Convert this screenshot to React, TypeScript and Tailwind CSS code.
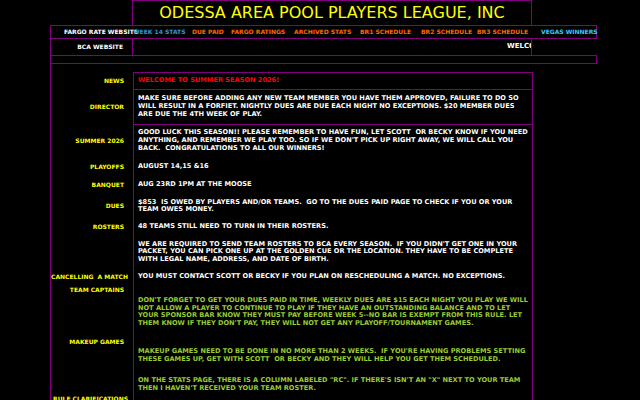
const navLinks = [
  { label: "WEEK 14 STATS", width: "w-[59px]", color: "text-[#3399cc]" },
  { label: "DUE PAID", width: "w-[39px]", color: "text-[#ff6600]" },
  { label: "FARGO RATINGS", width: "w-[63px]", color: "text-[#ff6600]" },
  { label: "ARCHIVED STATS", width: "w-[66px]", color: "text-[#ff6600]" },
  { label: "BR1 SCHEDULE", width: "w-[61px]", color: "text-[#ff6600]" },
  { label: "BR2 SCHEDULE", width: "w-[56px]", color: "text-[#ff6600]" },
  { label: "BR3 SCHEDULE", width: "w-[64px]", color: "text-[#ff6600]" },
  { label: "VEGAS WINNERS", width: "w-[56px]", color: "text-[#33ccff]" },
]

// left column labels, margins tuned to line up with the notices on the right
const labels = [
  { text: "NEWS", mt: "mt-[12.6px]" },
  { text: "DIRECTOR", mt: "mt-[18.5px]" },
  { text: "SUMMER 2026", mt: "mt-[26.6px]" },
  { text: "PLAYOFFS", mt: "mt-[18.6px]" },
  { text: "BANQUET", mt: "mt-[10.3px]" },
  { text: "DUES", mt: "mt-[13.3px]" },
  { text: "ROSTERS", mt: "mt-[13.3px]" },
  { text: "CANCELLING  A MATCH", mt: "mt-[42.3px]", wide: true },
  { text: "TEAM CAPTAINS", mt: "mt-[4.7px]" },
  { text: "MAKEUP GAMES", mt: "mt-[44.3px]" },
  { text: "RULE CLARIFICATIONS", mt: "mt-[49.9px]", wide: true },
]

const notices = [
  {
    mt: "mt-[4.2px]",
    color: "text-white",
    lines: [
      "GOOD LUCK THIS SEASON!! PLEASE REMEMBER TO HAVE FUN, LET SCOTT  OR BECKY KNOW IF YOU NEED",
      "ANYTHING, AND REMEMBER WE PLAY TOO. SO IF WE DON'T PICK UP RIGHT AWAY, WE WILL CALL YOU",
      "BACK.  CONGRATULATIONS TO ALL OUR WINNERS!",
    ],
  },
  { mt: "mt-[11.2px]", color: "text-white", lines: ["AUGUST 14,15 &16"] },
  { mt: "mt-[10.3px]", color: "text-white", lines: ["AUG 23RD 1PM AT THE MOOSE"] },
  {
    mt: "mt-[9.6px]",
    color: "text-white",
    lines: [
      "$853  IS OWED BY PLAYERS AND/OR TEAMS.  GO TO THE DUES PAID PAGE TO CHECK IF YOU OR YOUR",
      "TEAM OWES MONEY.",
    ],
  },
  { mt: "mt-[9.3px]", color: "text-white", lines: ["48 TEAMS STILL NEED TO TURN IN THEIR ROSTERS."] },
  {
    mt: "mt-[9.6px]",
    color: "text-white",
    lines: [
      "WE ARE REQUIRED TO SEND TEAM ROSTERS TO BCA EVERY SEASON.  IF YOU DIDN'T GET ONE IN YOUR",
      "PACKET, YOU CAN PICK ONE UP AT THE GOLDEN CUE OR THE LOCATION. THEY HAVE TO BE COMPLETE",
      "WITH LEGAL NAME, ADDRESS, AND DATE OF BIRTH.",
    ],
  },
  {
    mt: "mt-[9.6px]",
    color: "text-white",
    lines: ["YOU MUST CONTACT SCOTT OR BECKY IF YOU PLAN ON RESCHEDULING A MATCH. NO EXCEPTIONS."],
  },
  {
    mt: "mt-[15.7px]",
    color: "text-[#99cc33]",
    lines: [
      "DON'T FORGET TO GET YOUR DUES PAID IN TIME, WEEKLY DUES ARE $15 EACH NIGHT YOU PLAY WE WILL",
      "NOT ALLOW A PLAYER TO CONTINUE TO PLAY IF THEY HAVE AN OUTSTANDING BALANCE AND TO LET",
      "YOUR SPONSOR BAR KNOW THEY MUST PAY BEFORE WEEK 5--NO BAR IS EXEMPT FROM THIS RULE. LET",
      "THEM KNOW IF THEY DON'T PAY, THEY WILL NOT GET ANY PLAYOFF/TOURNAMENT GAMES.",
    ],
  },
  {
    mt: "mt-[20.2px]",
    color: "text-[#99cc33]",
    lines: [
      "MAKEUP GAMES NEED TO BE DONE IN NO MORE THAN 2 WEEKS.  IF YOU'RE HAVING PROBLEMS SETTING",
      "THESE GAMES UP, GET WITH SCOTT  OR BECKY AND THEY WILL HELP YOU GET THEM SCHEDULED.",
    ],
  },
  {
    mt: "mt-[13.6px]",
    color: "text-[#99cc33]",
    lines: [
      "ON THE STATS PAGE, THERE IS A COLUMN LABELED \"RC\". IF THERE'S ISN'T AN \"X\" NEXT TO YOUR TEAM",
      "THEN I HAVEN'T RECEIVED YOUR TEAM ROSTER.",
    ],
  },
]

function Lines({ lines }: { lines: string[] }) {
  return (
    <>
      {lines.map((line, i) => (
        <div key={i} className="whitespace-pre">
          {line}
        </div>
      ))}
    </>
  )
}

export default function App() {
  return (
    <div className="flex h-[400px] w-[640px] flex-col overflow-hidden bg-black font-['DejaVu_Sans',sans-serif] text-[6px] font-bold leading-[7.7px]">
      {/* header */}
      <div className="ml-[132px] flex h-[25px] w-[400px] shrink-0 items-center justify-center border-x border-t border-[#800080] text-[16px] font-normal leading-none text-[#ffff00]">
        ODESSA AREA POOL PLAYERS LEAGUE, INC
      </div>

      {/* link bar */}
      <div className="ml-[50px] flex h-[14px] w-[547px] shrink-0 items-center border border-[#800080]">
        <div className="w-[82px] shrink-0 whitespace-nowrap pl-[13px] text-white">FARGO RATE WEBSITE</div>
        {navLinks.map((link) => (
          <div key={link.label} className={`${link.width} shrink-0 whitespace-nowrap ${link.color}`}>
            {link.label}
          </div>
        ))}
      </div>

      <div className="ml-[50px] flex h-[16px] w-[482px] shrink-0 border-x border-[#800080]">
        <div className="flex w-[82px] shrink-0 items-center justify-end border-r border-[#800080] pr-[9px] text-white">
          BCA WEBSITE
        </div>
        {/* scrolling welcome banner, frozen mid-scroll */}
        <div className="flex flex-1 items-center overflow-hidden pl-[374px] text-[7px] text-white">
          <span className="whitespace-nowrap">WELCOME TO SUMMER SEASON 2026!</span>
        </div>
      </div>

      <div className="ml-[50px] h-[9px] w-[547px] shrink-0 border border-[#800080]" />

      {/* main */}
      <div className="ml-[50px] flex flex-1 border-l border-[#800080]">
        <div className="flex w-[82px] shrink-0 flex-col items-end pr-[9px] text-[#ffff00]">
          {labels.map((l) => (
            <div key={l.text} className={`${l.mt} whitespace-pre ${l.wide ? "-mr-[4px]" : ""}`}>
              {l.text}
            </div>
          ))}
        </div>

        <div className="mt-[8px] flex w-[400px] flex-col border-x border-t border-[#800080] text-[6.6px]">
          <div className="flex h-[17px] items-center border-b border-[#800080] pl-[4px] text-[#ff0000]">
            WELCOME TO SUMMER SEASON 2026!
          </div>
          <div className="flex h-[35px] flex-col justify-center border-b border-[#800080] pl-[4px] text-white">
            <Lines
              lines={[
                "MAKE SURE BEFORE ADDING ANY NEW TEAM MEMBER YOU HAVE THEM APPROVED, FAILURE TO DO SO",
                "WILL RESULT IN A FORFIET. NIGHTLY DUES ARE DUE EACH NIGHT NO EXCEPTIONS. $20 MEMBER DUES",
                "ARE DUE THE 4TH WEEK OF PLAY.",
              ]}
            />
          </div>
          <div className="pl-[4px]">
            {notices.map((n, i) => (
              <div key={i} className={`${n.mt} ${n.color}`}>
                <Lines lines={n.lines} />
              </div>
            ))}
          </div>
        </div>
      </div>
    </div>
  )
}
